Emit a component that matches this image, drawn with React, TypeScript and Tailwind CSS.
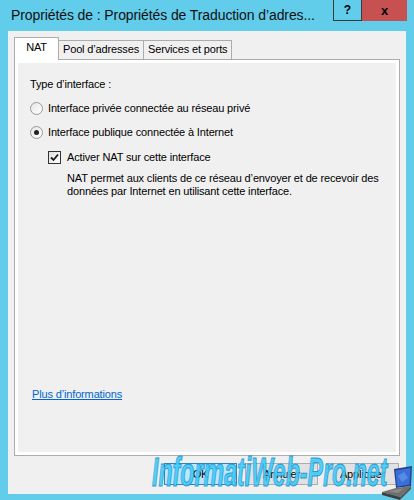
import type { ReactNode } from 'react'

function Radio({ checked }: { checked?: boolean }) {
  return (
    <span className="flex size-[13px] shrink-0 items-center justify-center rounded-full border border-[#9a9a9a] bg-gradient-to-br from-[#e6e6e6] to-white">
      {checked && <span className="size-[5px] rounded-full bg-[#222]" />}
    </span>
  )
}

function Checkbox() {
  return (
    <span className="flex size-[13px] shrink-0 items-center justify-center border border-[#333] bg-gradient-to-br from-[#dedede] to-white">
      <svg width="9" height="9" viewBox="0 0 9 9">
        <path d="M1 4.5 L3.5 7 L8 1.5" fill="none" stroke="#1a1a1a" strokeWidth="1.8" />
      </svg>
    </span>
  )
}

function Tab({ children, active }: { children: ReactNode; active?: boolean }) {
  return active ? (
    <div className="relative z-10 -mb-px flex h-[23px] w-[45px] items-start justify-center border border-b-0 border-[#acacac] bg-white pt-[2px]">
      {children}
    </div>
  ) : (
    <div className="flex h-[19px] items-center border border-b-0 border-l-0 border-[#acacac] bg-[#f0f0f0] px-[4px] pb-[1px]">
      {children}
    </div>
  )
}

function Button({ children, primary }: { children: ReactNode; primary?: boolean }) {
  return (
    <div
      className={
        primary
          ? 'flex h-[22px] w-[73px] items-center justify-center border border-[#3c7fb1] bg-[#bee6fd]'
          : 'flex h-[22px] w-[73px] items-center justify-center border border-[#adadad] bg-[#e1e1e1]'
      }
    >
      {children}
    </div>
  )
}

function Laptop() {
  return (
    <svg width="34" height="34" viewBox="0 0 34 34">
      <polygon points="14,3 32,0 31,20 16,22" fill="#2a3f8f" />
      <polygon points="15.5,4.5 30.5,2 29.5,18.5 17,20.5" fill="#3b6fd8" />
      <path d="M18 10 L24 6 L28 12 L22 16 Z" fill="#6aa0f0" opacity="0.6" />
      <polygon points="2,26 16,22 31,20 20,31" fill="#6f6f6f" />
      <polygon points="2,26 20,31 20,34 2,29" fill="#3f3f3f" />
      <polygon points="20,31 31,20 31,23 20,34" fill="#555" />
      <polygon points="8,25.5 16,23.5 24,22.5 18,27" fill="#8a8a8a" />
    </svg>
  )
}

export default function App() {
  return (
    <div
      className="relative flex h-[500px] w-[414px] flex-col overflow-hidden bg-[#61cdeb] text-[#000]"
      style={{ fontFamily: '"Liberation Sans", Arial, sans-serif' }}
    >
      <div className="flex h-[31px] shrink-0 items-start">
        <div className="min-w-0 flex-1 whitespace-nowrap pl-[11px] pt-[5px] text-[14px] leading-[20px] tracking-[-0.1px] text-[#111]">
          Propriétés de : Propriétés de Traduction d’adres...
        </div>
        <div className="flex h-[21px] w-[29px] items-center justify-center border border-t-0 border-[#3a3a3a] text-[12px] font-bold">
          ?
        </div>
        <div className="mr-[7px] flex h-[21px] w-[45px] items-center justify-center bg-[#c75050] text-[13px] font-bold">
          x
        </div>
      </div>

      <div className="mx-[8px] mb-[6px] flex flex-1 flex-col bg-[#f0f0f0] px-[6px] pt-[6px] text-[11px] leading-[15px] tracking-[-0.15px]">
        <div className="flex h-[22px] items-end">
          <Tab active>NAT</Tab>
          <Tab>Pool d’adresses</Tab>
          <Tab>Services et ports</Tab>
        </div>

        <div className="flex h-[397px] flex-col border border-[#acacac] bg-white p-[3px]">
          <div className="flex flex-1 flex-col bg-[#f0f0f0] pb-[50px] pl-[12px] pt-[14px]">
            <div>Type d’interface :</div>
            <div className="mt-[9px] flex items-center gap-[5px]">
              <Radio />
              <span>Interface privée connectée au réseau privé</span>
            </div>
            <div className="mt-[9px] flex items-center gap-[5px]">
              <Radio checked />
              <span>Interface publique connectée à Internet</span>
            </div>
            <div className="ml-[18px] mt-[10px] flex items-center gap-[6px]">
              <Checkbox />
              <span>Activer NAT sur cette interface</span>
            </div>
            <div className="ml-[37px] mt-[7px] whitespace-nowrap leading-[13px]">
              NAT permet aux clients de ce réseau d’envoyer et de recevoir des
              <br />
              données par Internet en utilisant cette interface.
            </div>
            <div className="flex-1" />
            <div className="ml-[2px] text-[#0066cc] underline">Plus d’informations</div>
          </div>
        </div>

        <div className="mr-[1px] mt-[7px] flex justify-end gap-[8px]">
          <Button primary>OK</Button>
          <Button>Annuler</Button>
          <Button>Appliquer</Button>
        </div>
      </div>

      <div className="pointer-events-none absolute bottom-[8px] left-[152px] flex items-end">
        <span
          className="origin-left scale-x-[0.58] whitespace-nowrap text-[40px] font-bold italic leading-[40px] text-[#3fcdf8] opacity-90"
          style={{ WebkitTextStroke: '1px #1a8fd0' }}
        >
          InformatiWeb-Pro.net
        </span>
      </div>
      <div className="pointer-events-none absolute bottom-0 right-0">
        <Laptop />
      </div>
    </div>
  )
}
